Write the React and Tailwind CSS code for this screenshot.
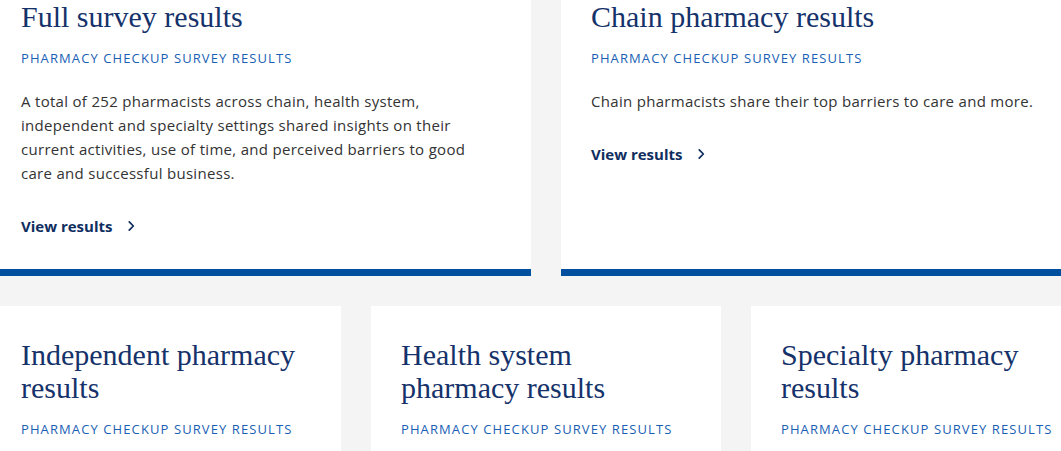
import React from 'react';

const serif = { fontFamily: '"Liberation Serif", "Times New Roman", serif' };
const sans = { fontFamily: '"Open Sans", sans-serif' };

const Chevron = () => (
  <svg viewBox="0 0 24 24" className="w-[14px] h-[14px] ml-[12px]" fill="none" stroke="currentColor" strokeWidth="3" strokeLinecap="round" strokeLinejoin="round">
    <path d="M9 5l7 7-7 7" />
  </svg>
);

const Label = () => (
  <div className="mt-[15px] text-[13px] leading-[20px] tracking-[1.1px] text-[#1a5fb4] uppercase" style={sans}>
    Pharmacy checkup survey results
  </div>
);

const ViewLink = () => (
  <a className="mt-[29px] flex items-center text-[15px] leading-[24px] font-bold text-[#0f2e5f]" style={sans}>
    View results <Chevron />
  </a>
);

const Card = ({ title, text, link, bar, nowrap }) => (
  <div className={`bg-white px-[30px] pt-[32px] pb-[31px] ${bar ? 'border-b-[7px] border-[#004f9f]' : ''}`}>
    <h3 className="text-[#15326a] text-[30px] leading-[33px]" style={serif}>{title}</h3>
    <Label />
    {text && (
      <p className={`mt-[21px] max-w-[470px] text-[15px] leading-[24px] text-[#333] tracking-[0.3px] ${nowrap ? 'whitespace-nowrap' : ''}`} style={sans}>{text}</p>
    )}
    {link && <ViewLink />}
  </div>
);

export default function App() {
  return (
    <div className="bg-[#f4f4f4] h-[451px] overflow-hidden">
      <div className="w-[1110px] ml-[-9px] mt-[-32px]">
        <div className="grid grid-cols-2 gap-[30px]">
          <Card
            bar
            link
            title="Full survey results"
            text="A total of 252 pharmacists across chain, health system, independent and specialty settings shared insights on their current activities, use of time, and perceived barriers to good care and successful business."
          />
          <Card
            bar
            link
            nowrap
            title="Chain pharmacy results"
            text="Chain pharmacists share their top barriers to care and more."
          />
        </div>
        <div className="grid grid-cols-3 gap-[30px] mt-[30px]">
          <Card title="Independent pharmacy results" />
          <Card title="Health system pharmacy results" />
          <Card title="Specialty pharmacy results" />
        </div>
      </div>
    </div>
  );
}
